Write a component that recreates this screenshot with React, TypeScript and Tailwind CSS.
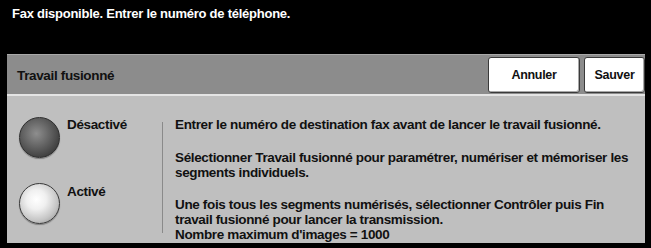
import React from "react";

const font = { fontFamily: '"Liberation Sans", Arial, sans-serif' };

function Radio({ dark }: { dark?: boolean }) {
  return (
    <div
      className={
        dark
          ? "w-[41px] h-[41px] shrink-0 rounded-full border border-[#2e2e2e] bg-[radial-gradient(circle_at_42%_40%,#8e8e8e_0%,#646464_40%,#3c3c3c_78%,#262626_100%)] shadow-[0_1px_1px_rgba(0,0,0,0.35)]"
          : "w-[41px] h-[41px] shrink-0 rounded-full border border-[#3a3a3a] bg-[radial-gradient(circle_at_42%_40%,#ffffff_0%,#f0f0f0_30%,#c4c4c4_65%,#7e7e7e_100%)] shadow-[0_1px_1px_rgba(0,0,0,0.35)]"
      }
    />
  );
}

export default function App() {
  return (
    <div
      className="w-[651px] h-[248px] bg-black flex flex-col overflow-hidden font-bold"
      style={font}
    >
      <div className="h-[54px] shrink-0 pl-[12px] pt-[6px] text-white text-[13px] tracking-[-0.25px] leading-[15px] whitespace-nowrap">
        Fax disponible. Entrer le numéro de téléphone.
      </div>
      <div className="ml-[7px] mr-[6px] flex flex-col">
        <div className="h-[40px] bg-[#8c8c8c] border-t border-[#a9a9a9] flex items-start justify-between pt-[2px]">
          <div className="pl-[10px] pt-[11px] text-[13.5px] tracking-[-0.35px] leading-[15px] text-[#111] whitespace-nowrap">
            Travail fusionné
          </div>
          <div className="flex gap-[4px]">
            <div className="w-[92px] h-[36px] bg-white border border-[#3a3a3a] rounded-[3px] shadow-[inset_-1px_-1px_0_#a8a8a8] flex items-center justify-center text-[12.5px] tracking-[-0.3px] text-[#111]">
              Annuler
            </div>
            <div className="w-[61px] h-[36px] bg-white border border-[#3a3a3a] rounded-[3px] shadow-[inset_-1px_-1px_0_#a8a8a8] flex items-center justify-center text-[12.5px] tracking-[-0.3px] text-[#111]">
              Sauver
            </div>
          </div>
        </div>
        <div className="h-[2px] bg-[#e4e4e4]" />
        <div className="h-[147px] bg-[#bfbfbf] flex pt-[21px] text-[13.5px] tracking-[-0.35px] leading-[15px] text-[#111]">
          <div className="w-[155px] shrink-0 flex flex-col pl-[12px]">
            <div className="flex gap-[7px]">
              <Radio dark />
              <div className="whitespace-nowrap">Désactivé</div>
            </div>
            <div className="flex gap-[7px] mt-[25px]">
              <Radio />
              <div className="whitespace-nowrap pt-[1px]">Activé</div>
            </div>
          </div>
          <div className="w-px h-[111px] mt-[5px] bg-[#8a8a8a] shrink-0" />
          <div className="pl-[12px] whitespace-nowrap">
            <p>Entrer le numéro de destination fax avant de lancer le travail fusionné.</p>
            <p className="mt-[18px]">
              Sélectionner Travail fusionné pour paramétrer, numériser et mémoriser les
              <br />
              segments individuels.
            </p>
            <p className="mt-[17px]">
              Une fois tous les segments numérisés, sélectionner Contrôler puis Fin
              <br />
              travail fusionné pour lancer la transmission.
              <br />
              Nombre maximum d'images = 1000
            </p>
          </div>
        </div>
      </div>
    </div>
  );
}
